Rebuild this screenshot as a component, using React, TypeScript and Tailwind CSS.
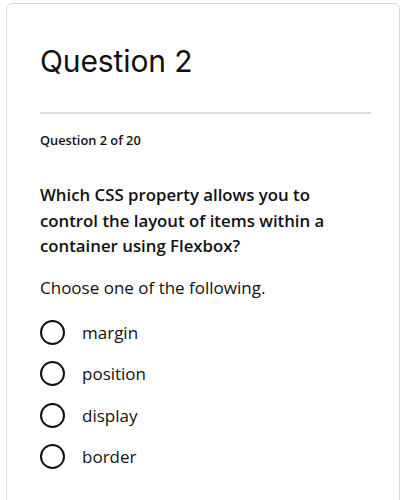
const options = ['margin', 'position', 'display', 'border'];

export default function App() {
  return (
    <div className="min-h-[500px] bg-white px-[6px] pt-[3px]">
      <div className="h-[520px] rounded-md border border-[#d9d9d9] bg-white pl-[33px] pr-[28px] pt-[37px]">
        <h1 className="font-['Inter',sans-serif] text-[30px] leading-[40px] tracking-[-0.1px] text-[#111]">
          Question 2
        </h1>

        <div className="mt-[31px] h-[2px] bg-[#dcdcdc]" />

        <p className="mt-[17px] font-['Open_Sans',sans-serif] text-[12.8px] font-semibold leading-[18px] text-[#111]">
          Question 2 of 20
        </p>

        <p className="mt-[33px] font-['Open_Sans',sans-serif] text-[16.8px] font-semibold leading-[25.5px] text-[#111]">
          Which CSS property allows you to control the layout of items within a container using Flexbox?
        </p>

        <p className="mt-[16px] font-['Open_Sans',sans-serif] text-[17px] leading-[25px] text-[#111]">
          Choose one of the following.
        </p>

        <div className="mt-[20px] flex flex-col gap-[16.5px]">
          {options.map((opt) => (
            <label key={opt} className="flex items-center gap-[17px]">
              <span className="h-[25px] w-[25px] rounded-full border-[2.5px] border-[#111]" />
              <span className="font-['Open_Sans',sans-serif] text-[17px] leading-[25px] text-[#111]">
                {opt}
              </span>
            </label>
          ))}
        </div>
      </div>
    </div>
  );
}
